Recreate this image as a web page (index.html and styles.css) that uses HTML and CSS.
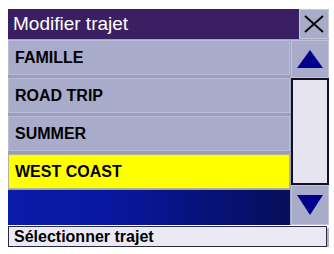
FILE: index.html
```html
<!DOCTYPE html>
<html>
<head>
<meta charset="utf-8">
<link rel="stylesheet" href="styles.css">
</head>
<body>
<div class="screen">
  <div class="frame">
    <div class="header">
      <div class="title">Modifier trajet</div>
      <div class="close">
        <svg width="20" height="18" viewBox="0 0 20 18"><path d="M1 1 L19 17 M19 1 L1 17" stroke="#000" stroke-width="1.8" fill="none"/></svg>
      </div>
    </div>
    <div class="main">
      <div class="list">
        <div class="row">FAMILLE</div>
        <div class="row">ROAD TRIP</div>
        <div class="row">SUMMER</div>
        <div class="row selected">WEST COAST</div>
        <div class="empty"></div>
      </div>
      <div class="scroll">
        <div class="btn up">
          <svg width="26" height="18" viewBox="0 0 26 18"><polygon points="13,0 26,18 0,18" fill="#00008a"/></svg>
        </div>
        <div class="track"></div>
        <div class="btn down">
          <svg width="26" height="20" viewBox="0 0 26 20"><polygon points="0,0 26,0 13,20" fill="#00008a"/></svg>
        </div>
      </div>
    </div>
  </div>
  <div class="status">Sélectionner trajet</div>
</div>
</body>
</html>
```
FILE: styles.css
```css
html, body {
  margin: 0;
  padding: 0;
  background: #ffffff;
}
body {
  font-family: "Liberation Sans", Arial, sans-serif;
}
.screen {
  padding: 9px 0 0 8px;
  width: 321px;
}
.frame {
  background: #a3a6c3;
  width: 321px;
}
.header {
  display: flex;
  height: 30px;
}
.title {
  flex: 1;
  background: #3b1f63;
  color: #ffffff;
  font-size: 19px;
  line-height: 30px;
  padding-left: 5px;
}
.close {
  width: 28px;
  background: #a9acc9;
  border: 1px solid #c4c6dc;
  display: flex;
  align-items: center;
  justify-content: center;
}
.main {
  display: flex;
  margin-top: 1px;
  gap: 1px;
}
.list {
  width: 282px;
  display: flex;
  flex-direction: column;
  gap: 3px;
  background: #9a9dbb;
}
.row {
  height: 33px;
  background: #a8abc9;
  border: 1px solid #b9bcd5;
  font-weight: bold;
  font-size: 16px;
  line-height: 33px;
  padding-left: 6px;
  color: #000;
}
.row.selected {
  background: #ffff00;
  border-color: #b4b49a;
}
.empty {
  height: 35px;
  margin-top: -2px;
  background: linear-gradient(90deg, #0a1ca8 0%, #0918a0 35%, #07127a 70%, #060f5a 100%);
}
.scroll {
  width: 38px;
  display: flex;
  flex-direction: column;
}
.btn {
  background: #a8abc9;
  border: 1px solid #bfc1d8;
  display: flex;
  align-items: center;
  justify-content: center;
}
.up {
  height: 36px;
}
.down {
  height: 38px;
}
.track {
  height: 103px;
  background: #e6e4f0;
  border: 2px solid #111122;
}
.status {
  margin-top: 1px;
  width: 312px;
  height: 19px;
  background: #ebe9f3;
  border: 1px solid #2a2a44;
  box-shadow: 2px 2px 0 #b4b4c0;
  font-weight: bold;
  font-size: 16px;
  line-height: 19px;
  padding-left: 5px;
  box-sizing: content-box;
}
```
